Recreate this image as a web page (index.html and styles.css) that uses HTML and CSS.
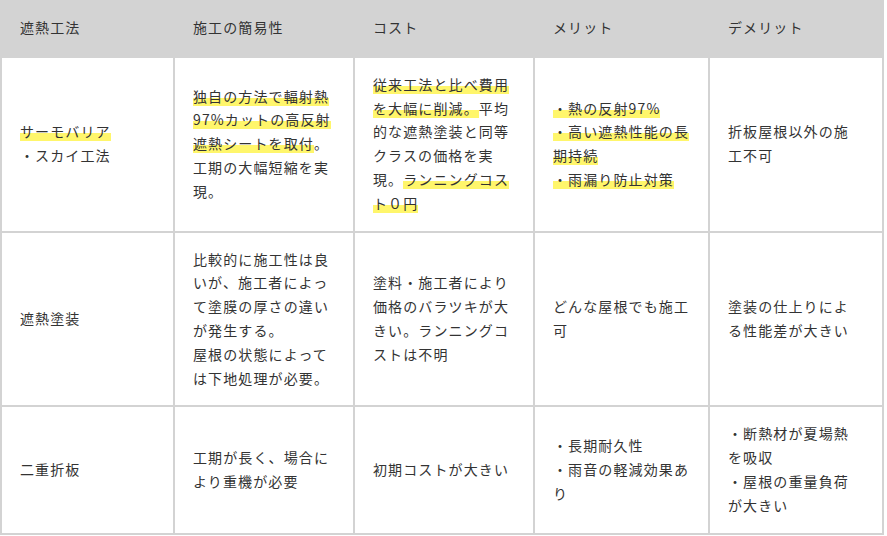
FILE: index.html
```html
<!DOCTYPE html>
<html lang="ja">
<head>
<meta charset="utf-8">
<title>遮熱工法 比較</title>
<link rel="stylesheet" href="styles.css">
</head>
<body>
<table class="compare">
  <colgroup>
    <col class="c1"><col class="c2"><col class="c3"><col class="c4"><col class="c5">
  </colgroup>
  <thead>
    <tr>
      <th>遮熱工法</th>
      <th>施工の簡易性</th>
      <th>コスト</th>
      <th>メリット</th>
      <th>デメリット</th>
    </tr>
  </thead>
  <tbody>
    <tr>
      <td><span class="mark">サーモバリア</span><br>・スカイ工法</td>
      <td><span class="mark">独自の方法で輻射熱97%カットの高反射遮熱シートを取付</span>。工期の大幅短縮を実現。</td>
      <td><span class="mark">従来工法と比べ費用を大幅に削減。</span>平均的な遮熱塗装と同等クラスの価格を実現。<span class="mark">ランニングコスト０円</span></td>
      <td><span class="mark">・熱の反射97%</span><br><span class="mark">・高い遮熱性能の長期持続</span><br><span class="mark">・雨漏り防止対策</span></td>
      <td>折板屋根以外の施工不可</td>
    </tr>
    <tr>
      <td>遮熱塗装</td>
      <td>比較的に施工性は良いが、施工者によって塗膜の厚さの違いが発生する。<br>屋根の状態によっては下地処理が必要。</td>
      <td>塗料・施工者により価格のバラツキが大きい。ランニングコストは不明</td>
      <td>どんな屋根でも施工可</td>
      <td>塗装の仕上りによ<br>る性能差が大きい</td>
    </tr>
    <tr>
      <td>二重折板</td>
      <td>工期が長く、場合により重機が必要</td>
      <td>初期コストが大きい</td>
      <td>・長期耐久性<br>・雨音の軽減効果あり</td>
      <td>・断熱材が夏場熱を吸収<br>・屋根の重量負荷が大きい</td>
    </tr>
  </tbody>
</table>
</body>
</html>
```
FILE: styles.css
```css
html, body {
  margin: 0;
  padding: 0;
  background: #ffffff;
}

body {
  font-family: "Noto Sans CJK JP", "Noto Sans", sans-serif;
  font-size: 14px;
  color: #333333;
}

.compare {
  width: 884px;
  border-collapse: collapse;
  table-layout: fixed;
}

.c1 { width: 173px; }
.c2 { width: 180px; }
.c3 { width: 180px; }
.c4 { width: 175px; }
.c5 { width: 174px; }

.compare th,
.compare td {
  border: 2px solid #d3d3d3;
  padding: 15px 18px;
  line-height: 1.7;
  letter-spacing: 0.08em;
  text-align: left;
  vertical-align: middle;
  font-weight: normal;
  word-break: break-all;
}

.compare th {
  background: #d3d3d3;
  padding-top: 14px;
  padding-bottom: 16px;
}

.mark {
  background: linear-gradient(transparent 62%, #fff66b 62%);
}
```
